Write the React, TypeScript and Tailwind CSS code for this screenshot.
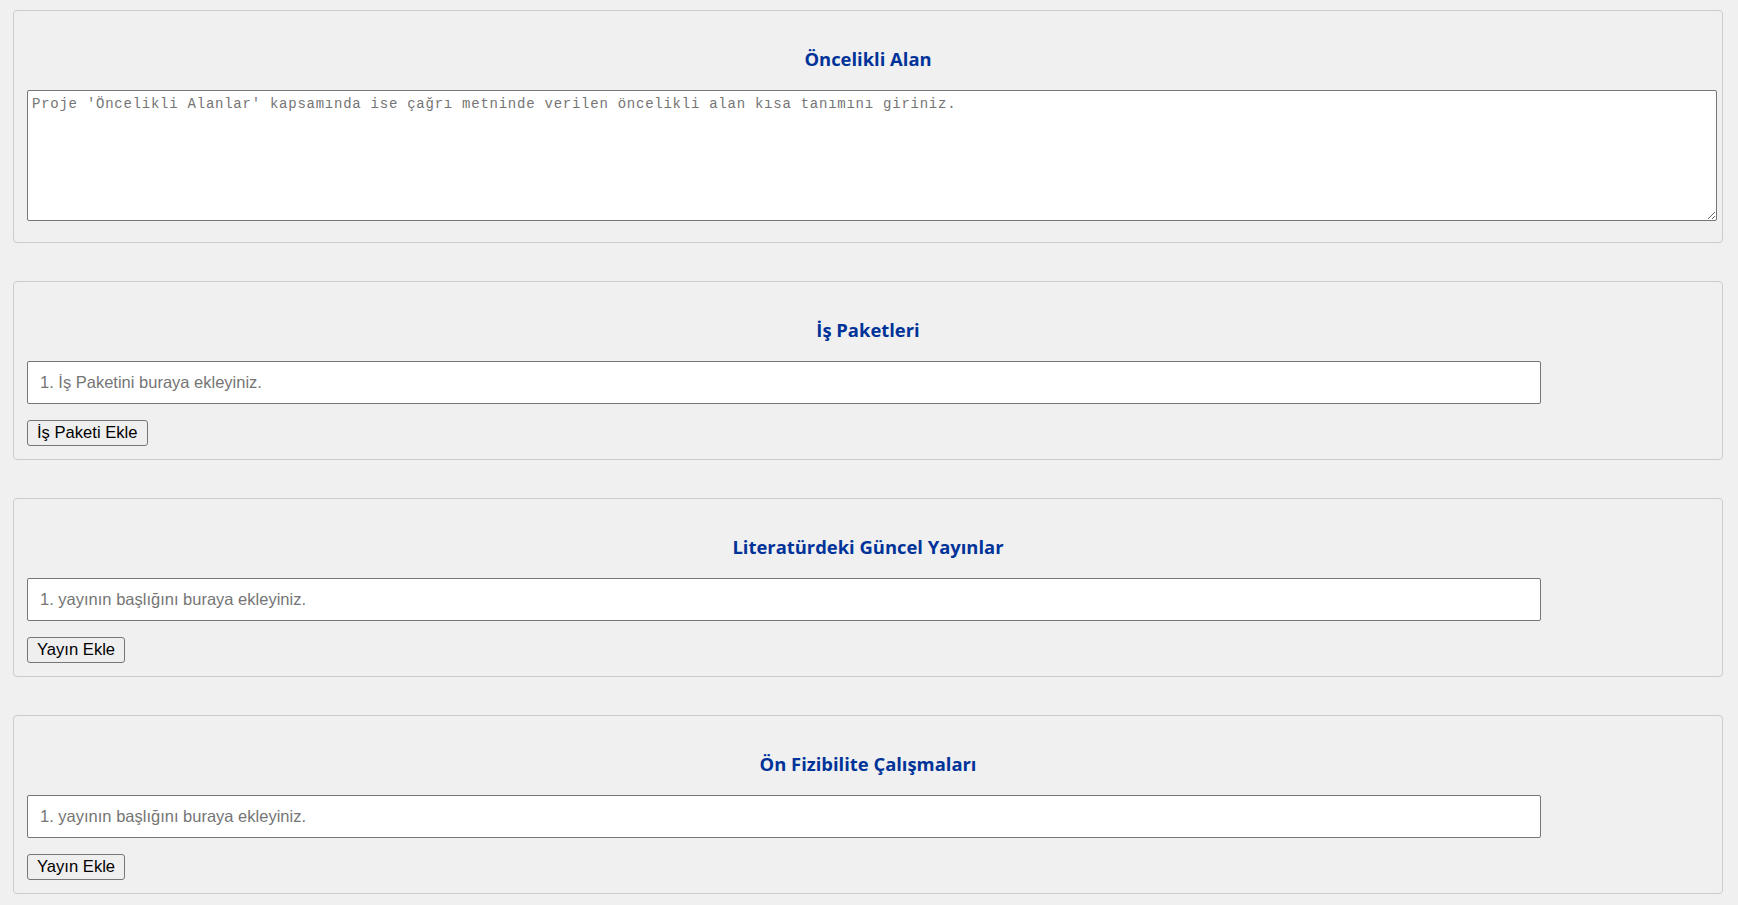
import React from "react";

type Section = {
  title: string;
  placeholder: string;
  button: string;
};

const sections: Section[] = [
  {
    title: "İş Paketleri",
    placeholder: "1. İş Paketini buraya ekleyiniz.",
    button: "İş Paketi Ekle",
  },
  {
    title: "Literatürdeki Güncel Yayınlar",
    placeholder: "1. yayının başlığını buraya ekleyiniz.",
    button: "Yayın Ekle",
  },
  {
    title: "Ön Fizibilite Çalışmaları",
    placeholder: "1. yayının başlığını buraya ekleyiniz.",
    button: "Yayın Ekle",
  },
];

function Heading({ children }: { children: React.ReactNode }) {
  return (
    <h3 className="mt-[22px] mb-[19px] text-center text-[18.4px] leading-[25px] font-bold text-[#003399] font-['Open_Sans',sans-serif]">
      {children}
    </h3>
  );
}

export default function App() {
  return (
    <div className="min-h-screen bg-[#f0f0f0] pt-[10px] pl-[13px] pr-[15px] pb-[10px] font-['Liberation_Sans',Arial,sans-serif]">
      <div className="flex flex-col gap-[38px]">
        {/* Öncelikli alan */}
        <div className="rounded-[4px] border border-[#cccccc] px-[13px] pt-[13px] pb-[21px]">
          <Heading>Öncelikli Alan</Heading>
          <textarea
            className="block h-[131px] w-[calc(100%+8px)] resize-y rounded-[2px] border border-[#767676] bg-white px-[4px] pt-[3px] text-[14px] tracking-[0.75px] text-black placeholder:text-[#757575] font-['Liberation_Mono',monospace] outline-none"
            placeholder="Proje 'Öncelikli Alanlar' kapsamında ise çağrı metninde verilen öncelikli alan kısa tanımını giriniz."
          />
        </div>

        {sections.map((s) => (
          <div
            key={s.title}
            className="rounded-[4px] border border-[#cccccc] px-[13px] pt-[13px] pb-[13px]"
          >
            <Heading>{s.title}</Heading>
            <input
              type="text"
              className="block h-[43px] w-[90%] rounded-[2px] border border-[#767676] bg-white px-[12px] text-[16.5px] text-black placeholder:text-[#757575] outline-none"
              placeholder={s.placeholder}
            />
            <button className="mt-[16px] h-[26px] rounded-[3px] border border-[#767676] bg-[#efefef] px-[9px] text-[16.6px] leading-[18px] text-black">
              {s.button}
            </button>
          </div>
        ))}
      </div>
    </div>
  );
}
